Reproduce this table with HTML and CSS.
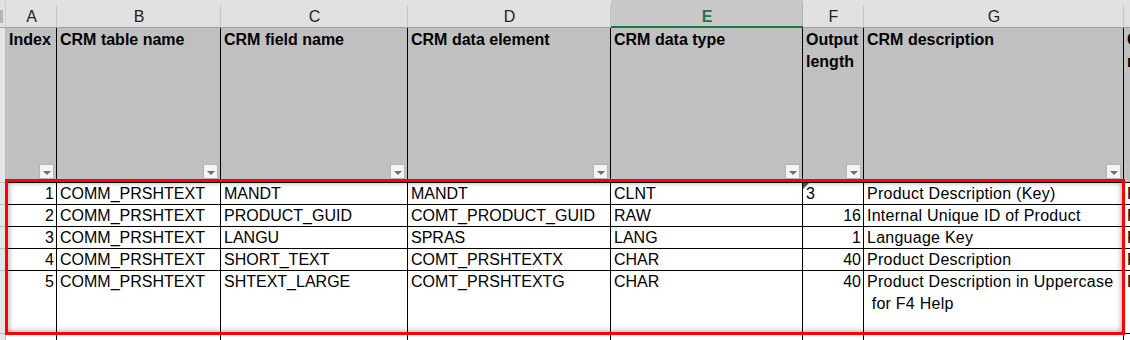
FILE: index.html
```html
<!DOCTYPE html>
<html>
<head>
<meta charset="utf-8">
<link rel="stylesheet" href="styles.css">
</head>
<body>
<div class="sheet">
  <div class="grid">
    <div class="corner"><span class="corner-mark"></span></div>
    <div class="colhead">A</div>
    <div class="colhead">B</div>
    <div class="colhead">C</div>
    <div class="colhead">D</div>
    <div class="colhead sel">E</div>
    <div class="colhead">F</div>
    <div class="colhead">G</div>
    <div class="colhead">H</div>

    <div class="rowhead"></div>
    <div class="hcell"><span class="htext">Index</span><span class="filter"></span></div>
    <div class="hcell"><span class="htext">CRM table name</span><span class="filter"></span></div>
    <div class="hcell"><span class="htext">CRM field name</span><span class="filter"></span></div>
    <div class="hcell"><span class="htext">CRM data element</span><span class="filter"></span></div>
    <div class="hcell"><span class="htext">CRM data type</span><span class="filter"></span></div>
    <div class="hcell"><span class="htext">Output length</span><span class="filter"></span></div>
    <div class="hcell"><span class="htext">CRM description</span><span class="filter"></span></div>
    <div class="hcell"><span class="htext">CRM<br>relevance</span></div>

    <div class="rowhead"></div>
    <div class="cell num">1</div>
    <div class="cell">COMM_PRSHTEXT</div>
    <div class="cell">MANDT</div>
    <div class="cell">MANDT</div>
    <div class="cell">CLNT</div>
    <div class="cell flag">3</div>
    <div class="cell desc">Product Description (Key)</div>
    <div class="cell">P</div>

    <div class="rowhead"></div>
    <div class="cell num">2</div>
    <div class="cell">COMM_PRSHTEXT</div>
    <div class="cell">PRODUCT_GUID</div>
    <div class="cell">COMT_PRODUCT_GUID</div>
    <div class="cell">RAW</div>
    <div class="cell num">16</div>
    <div class="cell desc">Internal Unique ID of Product</div>
    <div class="cell">P</div>

    <div class="rowhead"></div>
    <div class="cell num">3</div>
    <div class="cell">COMM_PRSHTEXT</div>
    <div class="cell">LANGU</div>
    <div class="cell">SPRAS</div>
    <div class="cell">LANG</div>
    <div class="cell num">1</div>
    <div class="cell desc">Language Key</div>
    <div class="cell">P</div>

    <div class="rowhead"></div>
    <div class="cell num">4</div>
    <div class="cell">COMM_PRSHTEXT</div>
    <div class="cell">SHORT_TEXT</div>
    <div class="cell">COMT_PRSHTEXTX</div>
    <div class="cell">CHAR</div>
    <div class="cell num">40</div>
    <div class="cell desc">Product Description</div>
    <div class="cell">P</div>

    <div class="rowhead"></div>
    <div class="cell num">5</div>
    <div class="cell">COMM_PRSHTEXT</div>
    <div class="cell">SHTEXT_LARGE</div>
    <div class="cell">COMT_PRSHTEXTG</div>
    <div class="cell">CHAR</div>
    <div class="cell num">40</div>
    <div class="cell desc wrap">Product Description in Uppercase<br>&nbsp;for F4 Help</div>
    <div class="cell">P</div>

    <div class="rowhead"></div>
    <div class="cell"></div>
    <div class="cell"></div>
    <div class="cell"></div>
    <div class="cell"></div>
    <div class="cell"></div>
    <div class="cell"></div>
    <div class="cell"></div>
    <div class="cell"></div>
  </div>
  <div class="highlight"></div>
</div>
</body>
</html>
```
FILE: styles.css
```css
body {
  margin: 0;
  background: #fff;
  font-family: "Liberation Sans", Arial, sans-serif;
}

.sheet {
  position: relative;
  width: 1130px;
  height: 340px;
  overflow: hidden;
}

.grid {
  display: grid;
  grid-template-columns: 6px 51px 164px 187px 203px 192px 61px 260px 200px;
  grid-template-rows: 28px 155px 22px 22px 22px 22px 63px 40px;
  width: max-content;
}

.grid > div {
  box-sizing: border-box;
}

.corner {
  background: #e1e1e1;
  border-bottom: 1px solid #9f9f9f;
  border-right: 1px solid #cfcfcf;
  padding-top: 10px;
}

.corner-mark {
  display: block;
  width: 3px;
  height: 13px;
  background: #b4b4b4;
}

.colhead {
  background: linear-gradient(#c4c4c4, #c4c4c4) right bottom / 1px 22px no-repeat, #e1e1e1;
  border-bottom: 1px solid #9f9f9f;
  text-align: center;
  font-size: 16px;
  line-height: 19px;
  padding-top: 7px;
  color: #222;
}

.colhead.sel {
  background: linear-gradient(#b0b0b0, #b0b0b0) right bottom / 1px 22px no-repeat, #c8c8c8;
  border-bottom: 2px solid #217346;
  color: #217346;
  font-weight: bold;
}

.rowhead {
  background: #e6e6e6;
  border-right: 1px solid #bdbdbd;
  border-bottom: 1px solid #bdbdbd;
}

.hcell {
  background: #c0c0c0;
  border-right: 1px solid #000;
  border-bottom: 1px solid #000;
  display: flex;
  flex-direction: column;
  font-weight: bold;
  font-size: 16px;
  line-height: 22px;
  padding: 1px 0 0 3px;
  overflow: hidden;
  color: #000;
}

.filter {
  margin-top: auto;
  align-self: flex-end;
  margin-right: 2px;
  margin-bottom: 3px;
  width: 15px;
  height: 15px;
  box-sizing: border-box;
  border: 1px solid #b4b4b4;
  background: #f4f4f4;
  display: flex;
  align-items: center;
  justify-content: center;
}

.filter::after {
  content: "";
  border-left: 4px solid transparent;
  border-right: 4px solid transparent;
  border-top: 4px solid #6e6e6e;
  margin-top: 2px;
}

.cell {
  background: #fff;
  border-right: 1px solid #000;
  border-bottom: 1px solid #000;
  font-size: 16px;
  line-height: 22px;
  padding: 0 3px;
  white-space: nowrap;
  overflow: hidden;
  color: #000;
}

.cell.num {
  text-align: right;
  padding-right: 2px;
}

.cell.desc {
  letter-spacing: 0.25px;
}

.cell.wrap {
  white-space: normal;
}

.cell.flag {
  position: relative;
}

.cell.flag::before {
  content: "";
  position: absolute;
  left: 0;
  top: 0;
  border-top: 6px solid #217346;
  border-right: 6px solid transparent;
}

.highlight {
  position: absolute;
  left: 5px;
  top: 179px;
  width: 1120px;
  height: 156px;
  box-sizing: border-box;
  border: 3px solid #ff0000;
  box-shadow: inset 0 0 6px rgba(0, 0, 0, 0.4);
  pointer-events: none;
}
```
